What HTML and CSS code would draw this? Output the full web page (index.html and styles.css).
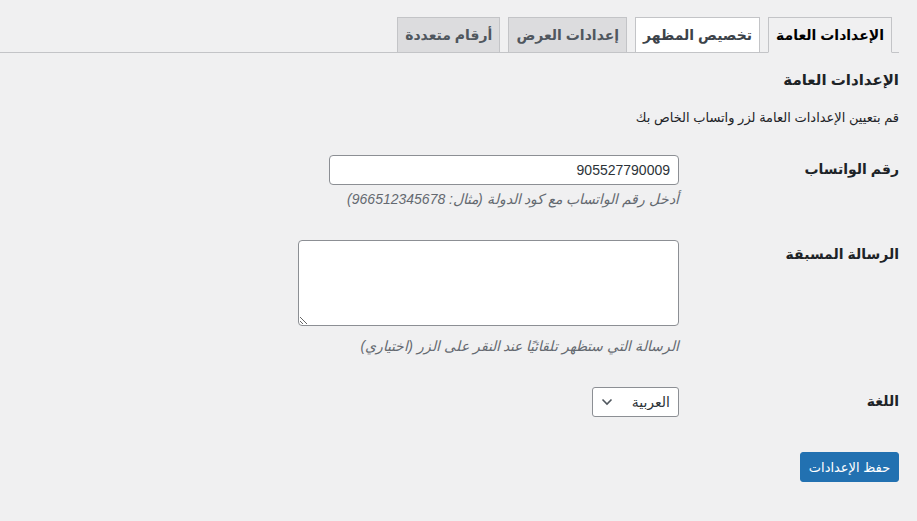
FILE: index.html
```html
<!DOCTYPE html>
<html lang="ar" dir="rtl">
<head>
<meta charset="utf-8">
<title>الإعدادات العامة</title>
<link rel="stylesheet" href="styles.css">
</head>
<body>
<div class="wrap">
  <nav class="tabs">
    <a class="tab tab-active">الإعدادات العامة</a>
    <a class="tab tab-hover">تخصيص المظهر</a>
    <a class="tab">إعدادات العرض</a>
    <a class="tab">أرقام متعددة</a>
  </nav>
  <h2 class="section-title">الإعدادات العامة</h2>
  <p class="section-desc">قم بتعيين الإعدادات العامة لزر واتساب الخاص بك</p>
  <table class="form-table">
    <tr>
      <th>رقم الواتساب</th>
      <td>
        <input class="text-input" type="text" value="905527790009">
        <p class="description">أدخل رقم الواتساب مع كود الدولة (مثال: 966512345678)</p>
      </td>
    </tr>
    <tr>
      <th>الرسالة المسبقة</th>
      <td>
        <textarea class="text-area"></textarea>
        <p class="description">الرسالة التي ستظهر تلقائيًا عند النقر على الزر (اختياري)</p>
      </td>
    </tr>
    <tr>
      <th>اللغة</th>
      <td>
        <span class="select-wrap">
          <select class="select">
            <option>العربية</option>
          </select>
          <svg class="chevron" width="12" height="8" viewBox="0 0 12 8"><path d="M1.5 1.5 L6 6 L10.5 1.5" fill="none" stroke="#50575e" stroke-width="1.6"/></svg>
        </span>
      </td>
    </tr>
  </table>
  <div class="submit">
    <button class="button-primary" type="button">حفظ الإعدادات</button>
  </div>
</div>
</body>
</html>
```
FILE: styles.css
```css
html, body {
  margin: 0;
  padding: 0;
  background: #f0f0f1;
}
body {
  font-family: "Liberation Sans", "DejaVu Sans", sans-serif;
  color: #1d2327;
  font-size: 13px;
}
.wrap {
  padding: 0 18px 0 0;
}
.tabs {
  display: flex;
  gap: 8px;
  padding: 17px 7px 0 0;
  border-bottom: 1px solid #c3c4c7;
}
.tab {
  display: block;
  margin-bottom: -1px;
  padding: 5px 7px;
  border: 1px solid #c3c4c7;
  background: #dcdcde;
  color: #50575e;
  font-size: 14px;
  font-weight: 600;
  line-height: 24px;
  white-space: nowrap;
}
.tab-active {
  background: #f0f0f1;
  border-bottom-color: #f0f0f1;
  color: #000;
}
.tab-hover {
  background: #fff;
  color: #3c434a;
}
.section-title {
  margin: 18px 0 0 0;
  font-size: 15px;
  line-height: 18px;
  font-weight: 600;
  color: #1d2327;
}
.section-desc {
  margin: 19px 0 0 0;
  font-size: 13px;
  line-height: 20px;
  color: #1d2327;
}
.form-table {
  margin-top: 12px;
  border-collapse: collapse;
}
.form-table th {
  width: 200px;
  padding: 20px 0 20px 10px;
  text-align: right;
  vertical-align: top;
  font-size: 14px;
  font-weight: 600;
  line-height: 18px;
  color: #1d2327;
}
.form-table td {
  padding: 15px 10px;
  vertical-align: top;
}
.text-input {
  display: block;
  box-sizing: border-box;
  width: 350px;
  height: 30px;
  margin: 0;
  padding: 0 8px;
  border: 1px solid #8c8f94;
  border-radius: 4px;
  background: #fff;
  color: #2c3338;
  font-family: inherit;
  font-size: 14px;
}
.text-area {
  display: block;
  box-sizing: border-box;
  width: 381px;
  height: 86px;
  margin: 0 0 10px 0;
  padding: 2px 6px;
  border: 1px solid #8c8f94;
  border-radius: 4px;
  background: #fff;
  font-family: inherit;
  font-size: 14px;
}
.description {
  margin: 4px 0 0 0;
  font-size: 14px;
  line-height: 21px;
  font-style: italic;
  color: #646970;
}
.select-wrap {
  position: relative;
  display: block;
  width: 87px;
}
.select {
  display: block;
  box-sizing: border-box;
  width: 87px;
  height: 30px;
  margin: 0;
  padding: 0 8px 0 24px;
  border: 1px solid #8c8f94;
  border-radius: 3px;
  background: #fff;
  color: #2c3338;
  font-family: inherit;
  font-size: 14px;
  -webkit-appearance: none;
  appearance: none;
}
.chevron {
  position: absolute;
  left: 9px;
  top: 11px;
  pointer-events: none;
}
.submit {
  padding: 20px 0 0 0;
}
.button-primary {
  box-sizing: border-box;
  width: 99px;
  height: 30px;
  padding: 0 4px;
  border: 1px solid #2271b1;
  border-radius: 3px;
  background: #2271b1;
  color: #fff;
  font-family: inherit;
  font-size: 13px;
  white-space: nowrap;
  cursor: pointer;
}
```
